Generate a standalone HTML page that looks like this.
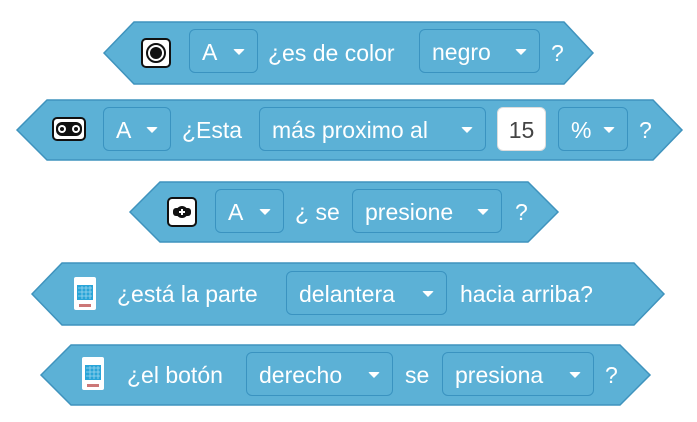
<!DOCTYPE html>
<html><head><meta charset="utf-8"><style>
body{margin:0;width:697px;height:422px;background:#fff;position:relative;overflow:hidden;font-family:"Liberation Sans",sans-serif;}
.t{position:absolute;color:#fff;font-size:23px;line-height:1;white-space:nowrap}
.f{position:absolute;height:44px;border:1.5px solid #3a93c0;border-radius:6px;box-sizing:border-box;color:#fff;font-size:23px;line-height:44px;padding-left:12px;white-space:nowrap}
.f i{position:absolute;right:12px;top:19px;width:0;height:0;border-left:6px solid transparent;border-right:6px solid transparent;border-top:6px solid #fff;border-radius:2px}
.w{background:#fff;color:#444;text-align:center;padding:0;border-color:#ddd}
svg.b{position:absolute;left:0;top:0}
</style></head><body>
<svg class="b" width="697" height="422">
<g fill="#5cb1d6" stroke="#3f93bd" stroke-width="1.5">
<polygon points="104,53 134,22 564,22 593,53 564,84 134,84"/>
<polygon points="17,130 47,100 653,100 682,130 653,160 47,160"/>
<polygon points="130,212 160,182 528,182 558,212 528,242 160,242"/>
<polygon points="32,294 62,263 634,263 664,294 634,325 62,325"/>
<polygon points="41,375 71,345 620,345 650,375 620,405 71,405"/>
</g>
<rect x="142" y="39" width="28" height="28" rx="4" fill="#fff" stroke="#111" stroke-width="2"/>
<circle cx="156" cy="53" r="9" fill="none" stroke="#111" stroke-width="2"/>
<circle cx="156" cy="53" r="6" fill="#111"/>
<rect x="53" y="118" width="32" height="22" rx="4" fill="#fff" stroke="#111" stroke-width="2"/>
<rect x="56" y="122" width="26" height="14" rx="6" fill="#111"/>
<circle cx="62" cy="129" r="4" fill="#fff"/><circle cx="62" cy="129" r="2" fill="#111"/>
<circle cx="76" cy="129" r="4" fill="#fff"/><circle cx="76" cy="129" r="2" fill="#111"/>
<rect x="168" y="198" width="28" height="28" rx="4" fill="#fff" stroke="#111" stroke-width="2"/>
<rect x="173" y="208" width="18" height="8" rx="3" fill="#111"/>
<circle cx="182" cy="212" r="6" fill="#111"/><path d="M179 212h6M182 209v6" stroke="#fff" stroke-width="2"/>
<g transform="translate(74,277)"><rect width="22" height="33" rx="2" fill="#fff"/><rect x="3" y="8" width="16" height="15" fill="#2aa5d8"/><path d="M4 11h14M4 15h14M4 19h14M8 9v13M12 9v13M16 9v13" stroke="#9ed6ee" stroke-width="0.8"/><rect x="5" y="27" width="12" height="3" fill="#c77"/></g>
<g transform="translate(82,357)"><rect width="22" height="33" rx="2" fill="#fff"/><rect x="3" y="8" width="16" height="15" fill="#2aa5d8"/><path d="M4 11h14M4 15h14M4 19h14M8 9v13M12 9v13M16 9v13" stroke="#9ed6ee" stroke-width="0.8"/><rect x="5" y="27" width="12" height="3" fill="#c77"/></g>
</svg>

<div class="f" style="left:189px;top:29px;width:69px">A<i></i></div>
<div class="t" style="left:268px;top:42px">¿es de color</div>
<div class="f" style="left:419px;top:29px;width:121px">negro<i></i></div>
<div class="t" style="left:551px;top:42px">?</div>

<div class="f" style="left:103px;top:107px;width:68px">A<i></i></div>
<div class="t" style="left:182px;top:119px">¿Esta</div>
<div class="f" style="left:259px;top:107px;width:227px">más proximo al<i></i></div>
<div class="f w" style="left:497px;top:107px;width:49px">15</div>
<div class="f" style="left:558px;top:107px;width:70px">%<i></i></div>
<div class="t" style="left:639px;top:119px">?</div>

<div class="f" style="left:215px;top:189px;width:69px">A<i></i></div>
<div class="t" style="left:295px;top:201px">¿ se</div>
<div class="f" style="left:352px;top:189px;width:150px">presione<i></i></div>
<div class="t" style="left:515px;top:201px">?</div>

<div class="t" style="left:117px;top:283px">¿está la parte</div>
<div class="f" style="left:286px;top:271px;width:161px">delantera<i></i></div>
<div class="t" style="left:460px;top:283px">hacia arriba?</div>

<div class="t" style="left:127px;top:364px">¿el botón</div>
<div class="f" style="left:246px;top:352px;width:147px">derecho<i></i></div>
<div class="t" style="left:405px;top:364px">se</div>
<div class="f" style="left:442px;top:352px;width:152px">presiona<i></i></div>
<div class="t" style="left:605px;top:364px">?</div>
</body></html>
